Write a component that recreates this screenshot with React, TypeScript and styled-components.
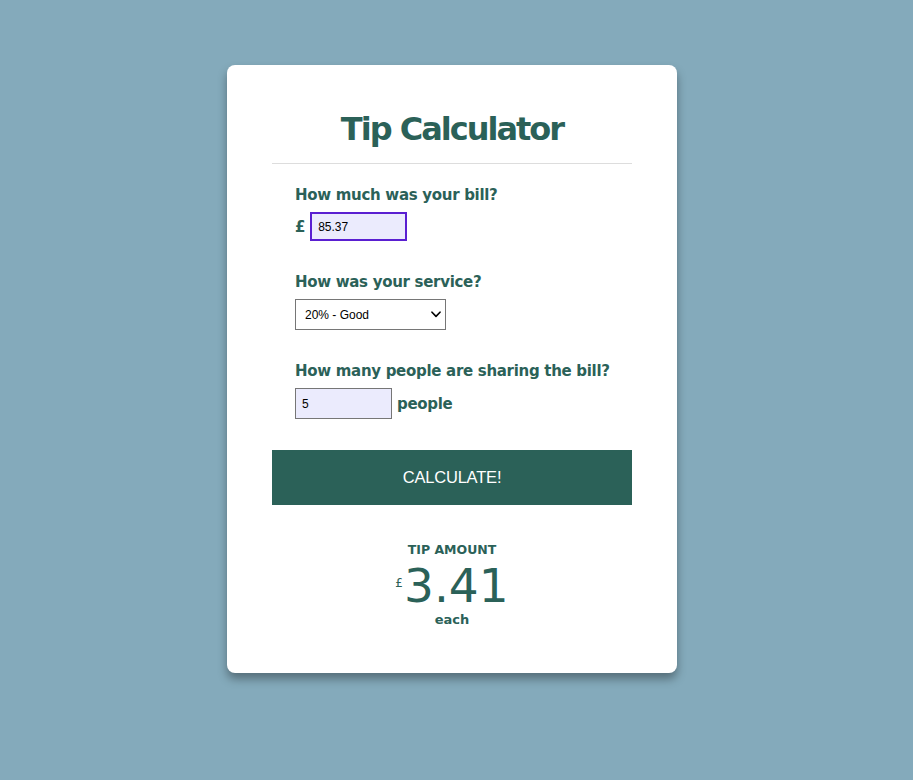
import React, { useState } from 'react'
import styled, { createGlobalStyle } from 'styled-components'

const GlobalStyle = createGlobalStyle`
  html, body {
    margin: 0;
    padding: 0;
    background: #84aabb;
    min-height: 780px;
  }
  body {
    font-family: 'DejaVu Sans', Verdana, sans-serif;
  }
`

const Page = styled.div`
  display: flex;
  justify-content: center;
  padding: 65px 9px 0 0;
`

const Card = styled.div`
  width: 450px;
  box-sizing: border-box;
  padding: 44px 45px 45px;
  background: #fff;
  border-radius: 8px;
  box-shadow: 0 6px 10px rgba(0, 0, 0, 0.35);
  color: #2b6158;
`

const Title = styled.h1`
  margin: 0;
  font-size: 32px;
  line-height: 40px;
  font-weight: bold;
  letter-spacing: -2px;
  text-align: center;
`

const Divider = styled.hr`
  margin: 14px 0 0;
  border: none;
  border-top: 1px solid #ddd;
  height: 0;
`

const Form = styled.div`
  display: flex;
  flex-direction: column;
  padding: 22px 0 0 23px;
`

const Field = styled.div`
  display: flex;
  flex-direction: column;
  gap: 8px;
  margin-bottom: 32px;
`

const Label = styled.label`
  font-size: 15px;
  line-height: 18px;
  font-weight: bold;
  letter-spacing: -0.3px;
`

const InputRow = styled.div`
  display: flex;
  align-items: center;
  gap: 5px;
  font-size: 15px;
  font-weight: bold;
  letter-spacing: -0.3px;
`

const NumberInput = styled.input<{ $focused?: boolean }>`
  box-sizing: border-box;
  width: 97px;
  height: ${(p) => (p.$focused ? '29px' : '31px')};
  padding: 0 6px;
  background: #ebebfd;
  border: ${(p) => (p.$focused ? '2px solid #5a1fd1' : '1px solid #767676')};
  border-radius: 0;
  font-family: 'Liberation Sans', Arial, sans-serif;
  font-size: 12px;
  letter-spacing: 0;
  color: #000;
  outline: none;
`

const SelectWrap = styled.div`
  position: relative;
  width: 151px;
  height: 31px;
`

const Select = styled.select`
  appearance: none;
  box-sizing: border-box;
  width: 151px;
  height: 31px;
  padding: 0 0 0 9px;
  background: #fff;
  border: 1px solid #767676;
  border-radius: 0;
  font-family: 'Liberation Sans', Arial, sans-serif;
  font-size: 12px;
  color: #000;
`

const Chevron = styled.svg`
  position: absolute;
  right: 5px;
  top: 12px;
  pointer-events: none;
`

const CalcButton = styled.button`
  display: block;
  width: 100%;
  height: 55px;
  margin-top: -1px;
  border: none;
  background: #2b6158;
  color: #fff;
  font-family: 'Liberation Sans', Arial, sans-serif;
  font-size: 16.5px;
  letter-spacing: -0.2px;
  cursor: pointer;
`

const Result = styled.div`
  display: flex;
  flex-direction: column;
  align-items: center;
  padding-top: 37px;
`

const ResultLabel = styled.div`
  font-size: 12.5px;
  line-height: 15px;
  font-weight: bold;
`

const Amount = styled.div`
  display: flex;
  align-items: flex-start;
  margin-top: 3px;
  font-size: 47px;
  line-height: 52px;
`

const Currency = styled.span`
  font-size: 12px;
  line-height: 12px;
  margin: 17px 1px 0 0;
`

const Each = styled.div`
  font-size: 13px;
  line-height: 16px;
  font-weight: bold;
`

export default function App() {
  const [bill, setBill] = useState('85.37')
  const [service, setService] = useState('0.2')
  const [people, setPeople] = useState('5')

  return (
    <>
      <GlobalStyle />
      <Page>
        <Card>
          <Title>Tip Calculator</Title>
          <Divider />
          <Form>
            <Field>
              <Label>How much was your bill?</Label>
              <InputRow>
                <span>£</span>
                <NumberInput
                  $focused
                  value={bill}
                  onChange={(e) => setBill(e.target.value)}
                />
              </InputRow>
            </Field>
            <Field>
              <Label>How was your service?</Label>
              <SelectWrap>
                <Select value={service} onChange={(e) => setService(e.target.value)}>
                  <option value="0.3">30% - Outstanding</option>
                  <option value="0.2">20% - Good</option>
                  <option value="0.15">15% - It was OK</option>
                  <option value="0.1">10% - Bad</option>
                  <option value="0.05">5% - Terrible</option>
                </Select>
                <Chevron width="10" height="7" viewBox="0 0 10 7">
                  <path
                    d="M1 1.2 L5 5.4 L9 1.2"
                    fill="none"
                    stroke="#000"
                    strokeWidth="1.6"
                    strokeLinecap="round"
                    strokeLinejoin="round"
                  />
                </Chevron>
              </SelectWrap>
            </Field>
            <Field>
              <Label>How many people are sharing the bill?</Label>
              <InputRow>
                <NumberInput value={people} onChange={(e) => setPeople(e.target.value)} />
                <span>people</span>
              </InputRow>
            </Field>
          </Form>
          <CalcButton>CALCULATE!</CalcButton>
          <Result>
            <ResultLabel>TIP AMOUNT</ResultLabel>
            <Amount>
              <Currency>£</Currency>
              <span>3.41</span>
            </Amount>
            <Each>each</Each>
          </Result>
        </Card>
      </Page>
    </>
  )
}
